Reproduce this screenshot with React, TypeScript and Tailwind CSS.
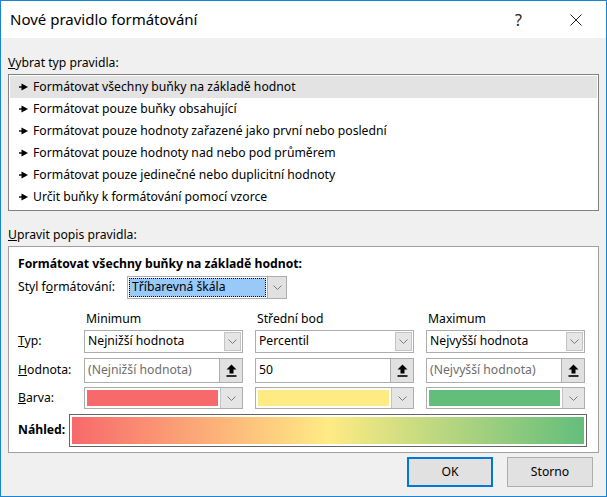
import React from 'react';

const font = { fontFamily: '"Noto Sans", "Open Sans", sans-serif' };

const Pointer = () => (
    <svg width="9" height="8" viewBox="0 0 9 8" className="shrink-0">
        <path d="M0 4 H4" stroke="#000" strokeWidth="1.4" />
        <path d="M2.5 0.5 L9 4 L2.5 7.5 Z" fill="#000" />
    </svg>
);

const Chevron = () => (
    <svg width="9" height="5" viewBox="0 0 9 5">
        <path d="M0.5 0.5 L4.5 4.5 L8.5 0.5" fill="none" stroke="#7a7a7a" strokeWidth="1" />
    </svg>
);

const UploadIcon = () => (
    <svg width="11" height="13" viewBox="0 0 11 13">
        <path d="M5.5 0.5 L10.5 5.5 H7.5 V9.5 H3.5 V5.5 H0.5 Z" fill="#000" />
        <path d="M0.5 12 H10.5" stroke="#000" strokeWidth="1.6" />
    </svg>
);

const Select = ({ value }: { value: string }) => (
    <div className="w-[159px] h-[23px] flex bg-white border border-[#adadad]">
        <div className="flex-1 flex items-center pl-[3px] text-black">{value}</div>
        <div className="w-[17px] my-[1px] mr-[1px] bg-[#e5e5e5] border border-[#c4c4c4] flex items-center justify-center">
            <Chevron />
        </div>
    </div>
);

const ValueInput = ({ value, placeholder }: { value?: string; placeholder?: boolean }) => (
    <div className="w-[159px] h-[25px] flex">
        <div className="flex-1 flex items-center pl-[3px] bg-white border border-[#adadad]">
            <span className={placeholder ? 'text-[#6d6d6d]' : 'text-black'}>{value}</span>
        </div>
        <div className="w-[23px] bg-[#e1e1e1] border border-[#adadad] border-l-0 flex items-center justify-center">
            <UploadIcon />
        </div>
    </div>
);

const ColorPick = ({ color }: { color: string }) => (
    <div className="w-[159px] h-[22px] flex bg-white border border-[#adadad]">
        <div className="flex-1 m-[2px]" style={{ backgroundColor: color }} />
        <div className="w-[22px] bg-[#e5e5e5] border-l border-[#c4c4c4] flex items-center justify-center">
            <Chevron />
        </div>
    </div>
);

const rules = [
    'Formátovat všechny buňky na základě hodnot',
    'Formátovat pouze buňky obsahující',
    'Formátovat pouze hodnoty zařazené jako první nebo poslední',
    'Formátovat pouze hodnoty nad nebo pod průměrem',
    'Formátovat pouze jedinečné nebo duplicitní hodnoty',
    'Určit buňky k formátování pomocí vzorce',
];

export default function App() {
    return (
        <div style={font} className="w-[607px] h-[497px] border border-[#1883d7] bg-[#f0f0f0] flex flex-col text-black overflow-hidden">
            {/* Title bar */}
            <div className="h-[37px] bg-white flex items-center shrink-0">
                <span className="pl-[9px] text-[15px] text-black flex-1">Nové pravidlo formátování</span>
                <span className="text-[16px] mr-[48px] text-[#222]">?</span>
                <svg width="12" height="12" viewBox="0 0 12 12" className="mr-[24px]">
                    <path d="M0.5 0.5 L11.5 11.5 M11.5 0.5 L0.5 11.5" stroke="#222" strokeWidth="1" />
                </svg>
            </div>

            <div className="px-[7px] flex flex-col text-[12.2px]">
                <div className="mt-[17px] leading-[16px]">
                    <span className="underline">V</span>ybrat typ pravidla:
                </div>
                <div className="mt-[3px] h-[137px] bg-white border border-[#828282] p-[1px] flex flex-col">
                    {rules.map((r, i) => (
                        <div key={r} className={`h-[22px] flex items-center gap-[5px] pl-[9px] ${i === 0 ? 'bg-[#e3e3e3]' : ''}`}>
                            <Pointer />
                            <span>{r}</span>
                        </div>
                    ))}
                </div>

                <div className="mt-[16px] leading-[16px]">
                    <span className="underline">U</span>pravit popis pravidla:
                </div>
                <div className="mt-[3px] h-[207px] bg-white border border-[#a0a0a0] pl-[9px] pt-[9px] flex flex-col">
                    <div className="font-bold leading-[16px]">Formátovat všechny buňky na základě hodnot:</div>
                    <div className="mt-[4px] flex items-center h-[23px]">
                        <span className="w-[109px]">
                            Styl f<span className="underline">o</span>rmátování:
                        </span>
                        <div className="w-[160px] h-[23px] flex border border-[#adadad] bg-white">
                            <div className="flex-1 m-[1px] bg-[#99c9f7] border border-dotted border-black flex items-center pl-[2px]">
                                Tříbarevná škála
                            </div>
                            <div className="w-[19px] bg-[#e1e1e1] border-l border-[#adadad] flex items-center justify-center">
                                <Chevron />
                            </div>
                        </div>
                    </div>

                    <div className="mt-[12px] flex leading-[16px]">
                        <div className="w-[66px]" />
                        <div className="w-[171px] pl-[2px]">Minimum</div>
                        <div className="w-[171px] pl-[2px]">Střední bod</div>
                        <div className="w-[159px] pl-[2px]">Maximum</div>
                    </div>

                    <div className="mt-[3px] flex items-center">
                        <div className="w-[66px]">
                            <span className="underline">T</span>yp:
                        </div>
                        <div className="flex gap-[12px]">
                            <Select value="Nejnižší hodnota" />
                            <Select value="Percentil" />
                            <Select value="Nejvyšší hodnota" />
                        </div>
                    </div>

                    <div className="mt-[5px] flex items-center">
                        <div className="w-[66px]">
                            <span className="underline">H</span>odnota:
                        </div>
                        <div className="flex gap-[12px]">
                            <ValueInput value="(Nejnižší hodnota)" placeholder />
                            <ValueInput value="50" />
                            <ValueInput value="(Nejvyšší hodnota)" placeholder />
                        </div>
                    </div>

                    <div className="mt-[4px] flex items-center">
                        <div className="w-[66px]">
                            <span className="underline">B</span>arva:
                        </div>
                        <div className="flex gap-[12px]">
                            <ColorPick color="#f8696b" />
                            <ColorPick color="#ffeb84" />
                            <ColorPick color="#63be7b" />
                        </div>
                    </div>

                    <div className="mt-[5px] flex items-center">
                        <div className="w-[51px] font-bold">Náhled:</div>
                        <div className="w-[518px] h-[33px] border border-[#646464] p-[2px] bg-white">
                            <div className="w-full h-full bg-[linear-gradient(to_right,#f8696b,#ffeb84_50%,#63be7b)]" />
                        </div>
                    </div>
                </div>

                <div className="mt-[4px] flex justify-end gap-[14px] pr-[6px]">
                    <button className="w-[86px] h-[30px] bg-[#e1e1e1] border-2 border-[#0078d7] text-[12.2px]">OK</button>
                    <button className="w-[86px] h-[30px] bg-[#e1e1e1] border border-[#adadad] text-[12.2px]">Storno</button>
                </div>
            </div>
        </div>
    );
}
